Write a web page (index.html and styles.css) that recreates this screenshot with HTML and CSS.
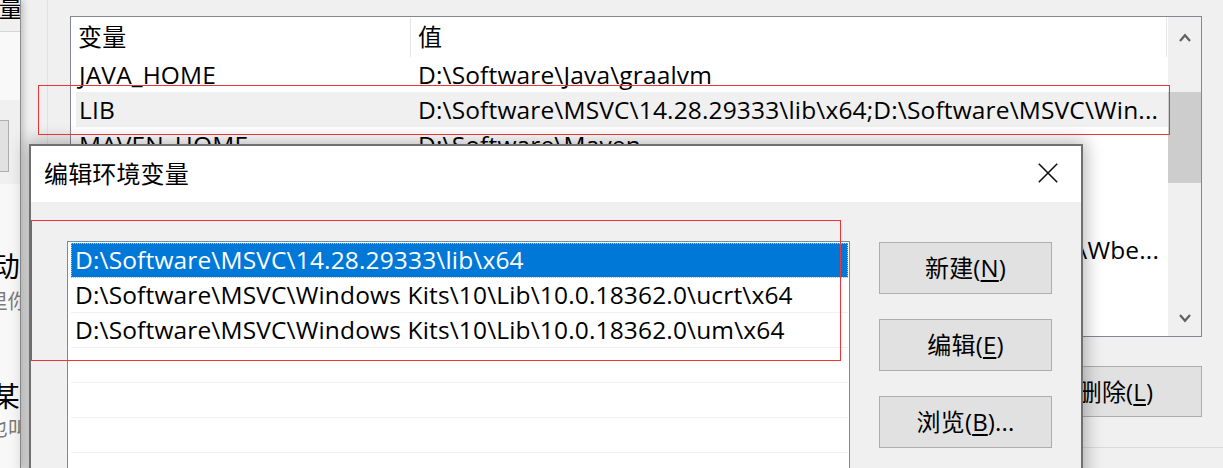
FILE: index.html
```html
<!DOCTYPE html>
<html lang="zh-CN">
<head>
<meta charset="utf-8">
<title>编辑环境变量</title>
<link rel="stylesheet" href="styles.css">
</head>
<body>
<div class="desktop">

  <div class="side-win">
    <div class="side-title"><span>环境变量</span></div>
    <div class="side-panel"></div>
    <div class="side-btn-row"><span class="side-btn"></span></div>
    <div class="side-pane">
      <div class="side-line big first"><span>自动</span></div>
      <div class="side-line small"><span>这里你</span></div>
      <div class="side-line big second"><span>某某</span></div>
      <div class="side-line small tight"><span>也叫</span></div>
    </div>
  </div>

  <div class="env-win">
    <div class="var-list">
      <div class="var-table">
        <div class="var-head">
          <div class="hcell hname">变量</div>
          <div class="hcell hval">值</div>
        </div>
        <div class="var-row"><div class="vname">JAVA_HOME</div><div class="vval">D:\Software\Java\graalvm</div></div>
        <div class="var-row sel"><div class="vname">LIB</div><div class="vval">D:\Software\MSVC\14.28.29333\lib\x64;D:\Software\MSVC\Win...</div></div>
        <div class="var-row"><div class="vname">MAVEN_HOME</div><div class="vval">D:\Software\Maven</div></div>
        <div class="var-row"><div class="vname">NUMBER_OF_PROCESSORS</div><div class="vval">8</div></div>
        <div class="var-row"><div class="vname">OS</div><div class="vval">Windows_NT</div></div>
        <div class="var-row"><div class="vname">Path</div><div class="vval tail"><span>C:\Windows\system32;C:\Windows;C:\Windows\System32\Wbe...</span></div></div>
        <div class="var-row"><div class="vname">PATHEXT</div><div class="vval">.COM;.EXE;.BAT;.CMD;.VBS;.VBE;.JS;.JSE</div></div>
        <div class="var-row"><div class="vname">PROCESSOR_ARCHITECTURE</div><div class="vval">AMD64</div></div>
      </div>
      <div class="vscroll">
        <div class="sb-arrow up">
          <svg width="12" height="9" viewBox="0 0 12 9"><path d="M1 8 L6 2.2 L11 8" fill="none" stroke="#606060" stroke-width="2.2"/></svg>
        </div>
        <div class="sb-track"><div class="sb-thumb"></div></div>
        <div class="sb-arrow down">
          <svg width="12" height="9" viewBox="0 0 12 9"><path d="M1 1 L6 6.8 L11 1" fill="none" stroke="#606060" stroke-width="2.2"/></svg>
        </div>
      </div>
    </div>
    <div class="env-actions">
      <button class="btn">删除(<u>L</u>)</button>
    </div>
    <div class="env-sep"></div>
  </div>

  <div class="mark mark-lib"></div>

  <div class="dialog">
    <div class="dlg-title">
      <span class="dlg-caption">编辑环境变量</span>
      <span class="dlg-close">
        <svg width="20" height="20" viewBox="0 0 20 20"><path d="M0.8 0.8 L19.2 19.2 M19.2 0.8 L0.8 19.2" fill="none" stroke="#111" stroke-width="1.6"/></svg>
      </span>
    </div>
    <div class="dlg-body">
      <div class="path-list">
        <div class="path-row sel">D:\Software\MSVC\14.28.29333\lib\x64</div>
        <div class="path-row">D:\Software\MSVC\Windows Kits\10\Lib\10.0.18362.0\ucrt\x64</div>
        <div class="path-row">D:\Software\MSVC\Windows Kits\10\Lib\10.0.18362.0\um\x64</div>
        <div class="path-row"></div>
        <div class="path-row"></div>
        <div class="path-row"></div>
        <div class="path-row"></div>
      </div>
      <div class="dlg-buttons">
        <button class="btn">新建(<u>N</u>)</button>
        <button class="btn">编辑(<u>E</u>)</button>
        <button class="btn">浏览(<u>B</u>)...</button>
      </div>
    </div>
  </div>

  <div class="mark mark-paths"></div>

</div>
</body>
</html>
```

FILE: styles.css
```css
* { box-sizing: border-box; }

html, body {
  margin: 0;
  padding: 0;
}

body {
  width: 1223px;
  height: 468px;
  overflow: hidden;
  background: #f0f0f0;
  font-family: "Open Sans", "Noto Sans CJK SC", sans-serif;
  font-size: 24.5px;
  letter-spacing: 0.15px;
  color: #000;
}

.desktop {
  position: relative;
  width: 1223px;
  height: 468px;
  overflow: hidden;
}

/* ---------- left (partially visible) window ---------- */
.side-win {
  position: absolute;
  left: 0;
  top: 0;
  width: 21px;
  height: 468px;
  z-index: 2;
  display: flex;
  flex-direction: column;
  background: #f0f0f0;
  border-right: 1px solid #8e8e8e;
  box-shadow: 2px 0 7px rgba(0, 0, 0, 0.22);
  overflow: hidden;
}

.side-title {
  height: 32px;
  display: flex;
  justify-content: flex-end;
  border-bottom: 1px solid #d6d6d6;
  overflow: hidden;
  white-space: nowrap;
}

.side-title span {
  display: block;
  font-size: 24px;
  line-height: 24px;
  margin-top: -4px;
  margin-right: -3px;
}

.side-panel {
  height: 68px;
  background: #f9f9f9;
}

.side-btn-row {
  height: 84px;
  padding-top: 20px;
}

.side-btn {
  display: block;
  width: 40px;
  height: 52px;
  margin-left: -31px;
  border: 1px solid #adadad;
  background: #e1e1e1;
}

.side-pane {
  flex: 1;
  background: #f8f8f8;
}

.side-line {
  display: flex;
  justify-content: flex-end;
  white-space: nowrap;
  overflow: hidden;
}

.side-line.big {
  font-size: 28px;
  line-height: 36px;
  color: #000;
}

.side-line.small {
  font-size: 20px;
  line-height: 28px;
  color: #7a7a7a;
  margin-top: 4px;
  margin-right: -8px;
}

.side-line.first { margin-top: 64px; }
.side-line.second { margin-top: 62px; }
.side-line.small.tight { margin-top: 1px; }

/* ---------- environment variables window (behind) ---------- */
.env-win {
  position: absolute;
  left: 47px;
  top: 0;
  right: 0;
  bottom: 0;
  z-index: 1;
  border-left: 1px solid #e2e2e2;
  padding: 16px 21px 0 22px;
  display: flex;
  flex-direction: column;
}

.var-list {
  display: flex;
  height: 321px;
  border: 1px solid #828790;
  background: #fff;
}

.var-table {
  flex: 1;
  overflow: hidden;
}

.var-head {
  display: flex;
  height: 40px;
  width: 1096px;
  border-right: 1px solid #e5e5e5;
  padding-top: 1px;
}

.hcell {
  font-size: 24px;
  line-height: 38px;
  white-space: nowrap;
}

.hname {
  width: 339px;
  padding-left: 7px;
}

.hval {
  flex: 1;
  padding-left: 7px;
  border-left: 1px solid #e5e5e5;
}

.var-row {
  display: flex;
  height: 35px;
  width: 1092px;
  margin-left: 5px;
  line-height: 35px;
  white-space: nowrap;
}

.var-row.sel {
  background: #f0f0f0;
}

.vname {
  width: 334px;
  padding-left: 3px;
  overflow: hidden;
}

.vval {
  flex: 1;
  padding-left: 8px;
  padding-right: 9px;
  overflow: hidden;
  text-overflow: ellipsis;
}

.vval.tail {
  display: flex;
  justify-content: flex-end;
}

.vscroll {
  width: 33px;
  display: flex;
  flex-direction: column;
  background: #f0f0f0;
}

.sb-arrow {
  display: flex;
  align-items: center;
  justify-content: center;
}

.sb-arrow.up { height: 40px; }
.sb-arrow.down { height: 38px; padding-top: 2px; }

.sb-track {
  flex: 1;
  padding-top: 35px;
}

.sb-thumb {
  height: 91px;
  background: #cdcdcd;
}

.env-actions {
  display: flex;
  justify-content: flex-end;
  margin-top: 29px;
}

.env-actions .btn {
  height: 51px;
}

.env-sep {
  margin-top: 30px;
  margin-right: -21px;
  border-top: 1px solid #dadada;
}

/* ---------- buttons ---------- */
.btn {
  width: 173px;
  height: 52px;
  padding: 0;
  border: 1px solid #adadad;
  background: #e1e1e1;
  font-family: inherit;
  font-size: 24px;
  letter-spacing: inherit;
  line-height: 48px;
  color: #000;
  text-align: center;
}

.btn u {
  text-decoration-thickness: 1.5px;
  text-underline-offset: 3px;
}

/* ---------- dialog ---------- */
.dialog {
  position: absolute;
  left: 29px;
  top: 144px;
  width: 1054px;
  height: 400px;
  z-index: 3;
  border: 2px solid #707070;
  background: #f0f0f0;
  box-shadow: 0 0 16px 3px rgba(0, 0, 0, 0.28);
  display: flex;
  flex-direction: column;
  overflow: hidden;
}

.dlg-title {
  height: 56px;
  background: #fff;
  display: flex;
  align-items: center;
  justify-content: space-between;
  padding-left: 13px;
  padding-right: 23px;
}

.dlg-caption {
  font-size: 24px;
  line-height: 32px;
  white-space: nowrap;
}

.dlg-close {
  display: flex;
  width: 20px;
  height: 20px;
  margin-top: -2px;
}

.dlg-body {
  flex: 1;
  display: flex;
  padding: 39px 0 0 36px;
}

.path-list {
  width: 783px;
  border: 1px solid #828790;
  border-bottom: none;
  background: #fff;
  padding: 1px 1px 0 3px;
}

.path-row {
  height: 35px;
  line-height: 34px;
  padding-left: 4px;
  border-bottom: 1px solid #efefef;
  white-space: nowrap;
  overflow: hidden;
}

.path-row.sel {
  background: #0078d7;
  color: #fff;
  outline: 1px dotted #f2b46b;
  outline-offset: -1px;
}

.dlg-buttons {
  display: flex;
  flex-direction: column;
  gap: 25px;
  margin-left: 29px;
  padding-top: 1px;
}

/* ---------- red annotation boxes ---------- */
.mark {
  position: absolute;
  z-index: 4;
  border: 1px solid #ec3636;
  pointer-events: none;
}

.mark-lib {
  left: 38px;
  top: 85px;
  width: 1132px;
  height: 50px;
}

.mark-paths {
  left: 31px;
  top: 220px;
  width: 810px;
  height: 141px;
}
```
